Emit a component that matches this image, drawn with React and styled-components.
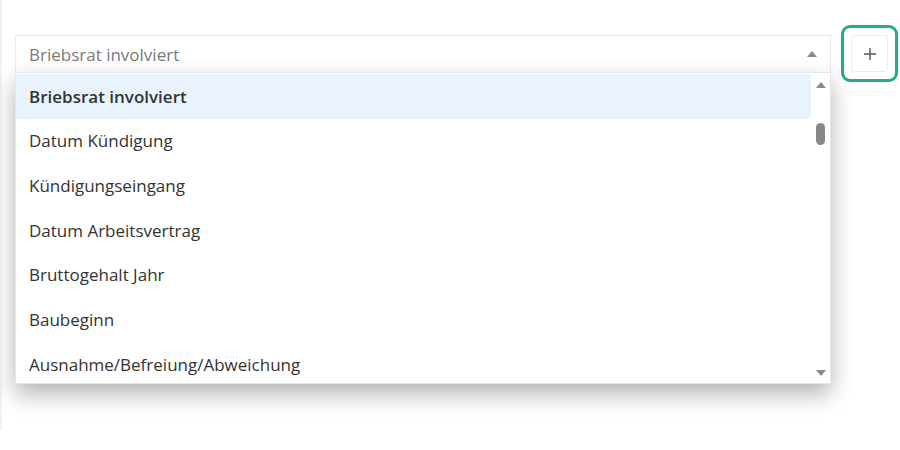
import React from "react";
import styled, { createGlobalStyle } from "styled-components";

const GlobalStyle = createGlobalStyle`
  body {
    margin: 0;
    background: #fff;
    font-family: "Open Sans", "Noto Sans", sans-serif;
  }
`;

const options = [
  "Briebsrat involviert",
  "Datum Kündigung",
  "Kündigungseingang",
  "Datum Arbeitsvertrag",
  "Bruttogehalt Jahr",
  "Baubeginn",
  "Ausnahme/Befreiung/Abweichung",
];

const Panel = styled.div`
  height: 430px;
  border-left: 2px solid #f2f2f2;
  padding: 25px 2px 0 13px;
  box-sizing: border-box;
`;

const Row = styled.div`
  display: flex;
  align-items: flex-start;
  gap: 10px;
`;

const SelectWrap = styled.div`
  position: relative;
  width: 818px;
  margin-top: 10px;
`;

const SelectBox = styled.div`
  height: 37px;
  box-sizing: border-box;
  border: 1px solid #e9e9e9;
  border-bottom: none;
  display: flex;
  align-items: center;
  justify-content: space-between;
  padding: 0 13px 0 13px;
  font-size: 17px;
  color: #7a7a7a;
`;

const Caret = styled.span`
  width: 0;
  height: 0;
  border-left: 5px solid transparent;
  border-right: 5px solid transparent;
  border-${({ $down }) => ($down ? "top" : "bottom")}: 6px solid #8a8a8a;
`;

const Dropdown = styled.div`
  position: absolute;
  top: 37px;
  left: 0;
  right: 0;
  height: 312px;
  background: #fff;
  border: 1px solid #e6e6e6;
  box-sizing: border-box;
  box-shadow: 0 10px 22px rgba(0, 0, 0, 0.3);
  display: flex;
  overflow: hidden;
`;

const List = styled.ul`
  flex: 1;
  margin: 0;
  padding: 1px 0 0;
  list-style: none;
`;

const Option = styled.li`
  height: 44.67px;
  display: flex;
  align-items: center;
  padding-left: 13px;
  font-size: 17px;
  color: #333;
  font-weight: ${({ $active }) => ($active ? 600 : 400)};
  background: ${({ $active }) => ($active ? "#e8f3fe" : "transparent")};
`;

const Scrollbar = styled.div`
  width: 19px;
  display: flex;
  flex-direction: column;
  align-items: center;
  padding: 9px 0 7px;
  box-sizing: border-box;
`;

const Thumb = styled.div`
  width: 9px;
  height: 22px;
  border-radius: 5px;
  background: #888;
  margin-top: 35px;
`;

const Spacer = styled.div`
  flex: 1;
`;

const AddRing = styled.div`
  padding: 7px;
  border: 3px solid #21ad8e;
  border-radius: 9px;
`;

const AddButton = styled.button`
  width: 37px;
  height: 37px;
  border: 1px solid #ececec;
  border-radius: 3px;
  background: #fff;
  display: flex;
  align-items: center;
  justify-content: center;
  padding: 0;
`;

export default function App() {
  return (
    <>
      <GlobalStyle />
      <Panel>
        <Row>
          <SelectWrap>
            <SelectBox>
              <span>Briebsrat involviert</span>
              <Caret />
            </SelectBox>
            <Dropdown>
              <List>
                {options.map((o, i) => (
                  <Option key={o} $active={i === 0}>
                    {o}
                  </Option>
                ))}
              </List>
              <Scrollbar>
                <Caret />
                <Thumb />
                <Spacer />
                <Caret $down />
              </Scrollbar>
            </Dropdown>
          </SelectWrap>
          <AddRing>
            <AddButton aria-label="Hinzufügen">
              <svg width="14" height="14" viewBox="0 0 14 14">
                <path d="M7 1v12M1 7h12" stroke="#555" strokeWidth="1.4" />
              </svg>
            </AddButton>
          </AddRing>
        </Row>
      </Panel>
    </>
  );
}
